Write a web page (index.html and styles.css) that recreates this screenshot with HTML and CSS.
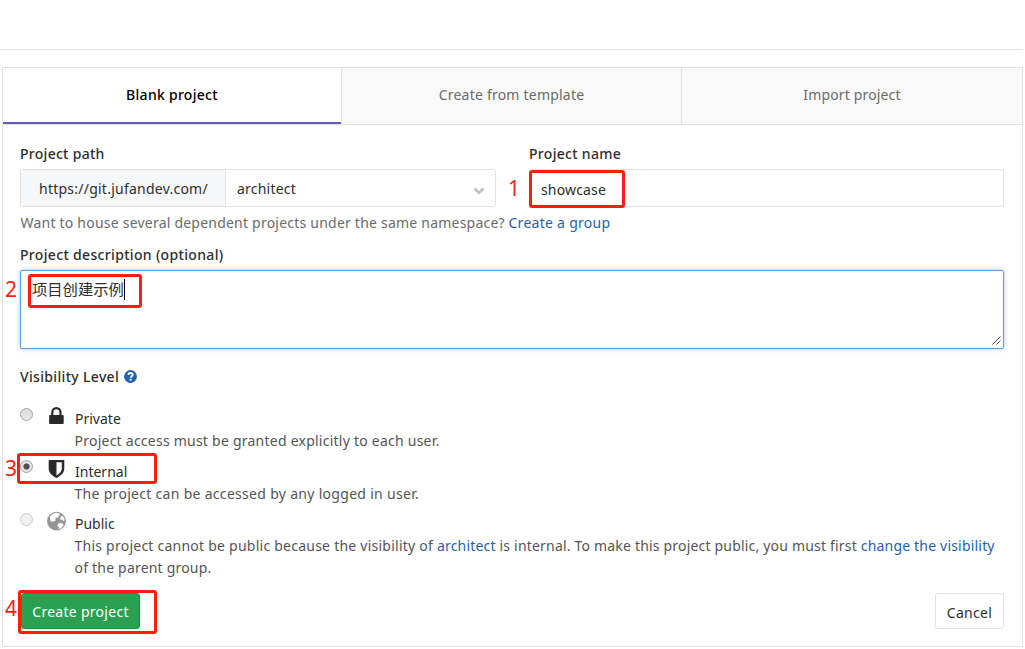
FILE: index.html
```html
<!DOCTYPE html>
<html lang="en">
<head>
<meta charset="utf-8">
<title>New project</title>
<link rel="stylesheet" href="styles.css">
</head>
<body>
<div class="page">
  <header class="topbar"></header>
  <main class="card">
    <nav class="tabs">
      <a class="tab active"><span class="t-blank">Blank project</span></a>
      <a class="tab"><span class="t-template">Create from template</span></a>
      <a class="tab"><span class="t-import">Import project</span></a>
    </nav>
    <form class="form">
      <div class="row">
        <div class="field path">
          <label class="label l-path">Project path</label>
          <div class="group">
            <span class="prefix"><span class="p-url">https://git.jufandev.com/</span></span>
            <span class="select"><span class="p-arch">architect</span>
              <svg class="chevron" width="12" height="8" viewBox="0 0 12 8"><path d="M1.500 1.500 6 5.800l4.500-4.300" fill="none" stroke="#bfbfbf" stroke-width="2.600"/></svg>
            </span>
          </div>
        </div>
        <div class="field name">
          <label class="label l-name">Project name</label>
          <div class="input"><span class="p-show">showcase</span></div>
        </div>
      </div>
      <p class="hint"><span class="h-text">Want to house several dependent projects under the same namespace?</span> <a class="link h-link">Create a group</a></p>
      <label class="label desc-label"><span class="l-desc">Project description (optional)</span></label>
      <div class="textarea"><span class="cjk">项目创建示例</span><span class="caret"></span>
        <svg class="grip" width="9" height="9" viewBox="0 0 9 9"><path d="M.5 8.500l8-8M4.500 8.500l4-4" stroke="#555" fill="none"/></svg>
      </div>
      <div class="label vis-label"><span class="l-vis">Visibility Level</span>
        <svg class="help" width="13" height="13" viewBox="0 0 13 13"><circle cx="6.500" cy="6.500" r="6.400" fill="#1f62b0"/><path d="M4.400 5c0-2.700 4.500-2.600 4.300-.2C8.600 6.200 6.700 6.200 6.700 7.800" fill="none" stroke="#fff" stroke-width="1.900"/><rect x="5.600" y="8.800" width="2" height="1.800" fill="#fff"/></svg>
      </div>
      <div class="option first">
        <span class="radio"></span>
        <svg class="icon" width="20" height="20" viewBox="0 0 20 20"><path d="M6.300 9V6.200a4.100 4.100 0 0 1 8.200 0V9" fill="none" stroke="#2a2a2a" stroke-width="2.200"/><rect x="3.100" y="9" width="14.600" height="9" rx=".8" fill="#2a2a2a"/></svg>
        <div class="body"><div class="title">Private</div><div class="text"><span class="d-priv">Project access must be granted explicitly to each user.</span></div></div>
      </div>
      <div class="option second">
        <span class="radio checked"></span>
        <svg class="icon" width="20" height="20" viewBox="0 0 20 20"><path d="M2.700 1h15.600v8.500c0 4.500-3.700 7.500-7.800 9.500-4.100-2-7.800-5-7.800-9.500z" fill="#2a2a2a"/><path d="M10.500 3.200h5.300v6.300c0 3-2.300 5.200-5.300 6.900z" fill="#fff"/></svg>
        <div class="body"><div class="title">Internal</div><div class="text"><span class="d-int">The project can be accessed by any logged in user.</span></div></div>
      </div>
      <div class="option third">
        <span class="radio disabled"></span>
        <svg class="icon" width="20" height="20" viewBox="0 0 20 20"><circle cx="10.500" cy="10.200" r="9.400" fill="#969696"/><path d="M3.800 5.500 6.300 3l3.900-1.200 3.300.6.300 1.700-1.500 1.300.2 1.500-1.800-.6-1.500 1.600.4 1.800-1.500.8-1.300-.5-.6 1.200-1.600-1.500-.6-2zM14.300 6.200l1.900-1.700 1.800 2.200.7 2.600-1.200.6-1.500-1.400-1.700.2zM12 12.800l2.300-1 2.700 1.200.6 1-2.200 3-2.700 1.200.2-1.900-1.400-1.600z" fill="#fff"/></svg>
        <div class="body"><div class="title">Public</div><div class="text"><span class="d-pub"><span class="d-lead">This project cannot be public because the visibility of </span><a class="link">architect</a> is internal. To make this project public, you must first <a class="link">change the visibility</a></span><br><span class="d-parent">of the parent group.</span></div></div>
      </div>
      <div class="actions">
        <button type="button" class="btn create"><span class="b-create">Create project</span></button>
        <button type="button" class="btn cancel"><span class="b-cancel">Cancel</span></button>
      </div>
    </form>
  </main>
  <span class="mark m1"></span><span class="num n1">1</span>
  <span class="mark m2"></span><span class="num n2">2</span>
  <span class="mark m3"></span><span class="num n3">3</span>
  <span class="mark m4"></span><span class="num n4">4</span>
</div>
</body>
</html>
```
FILE: styles.css
```css
* { box-sizing: border-box; }
body { margin: 0; background: #fff; color: #2e2e2e; font: 14px/20px "Noto Sans", "Noto Sans CJK SC", sans-serif; }
.page { position: relative; width: 1023px; height: 649px; overflow: hidden; }
.topbar { height: 50px; border-bottom: 1px solid #e1e1e1; }
.card { margin: 17px 0 0 2px; width: 1021px; height: 580px; border: 1px solid #e1e1e1; }
.tabs { display: grid; grid-template-columns: 339px 340px 340px; height: 57px; border-bottom: 1px solid #e1e1e1; }
.tab { display: flex; align-items: center; justify-content: center; padding-bottom: 2px; background: #f9f9f9; color: #6b6b6b; border-right: 1px solid #e1e1e1; }
.tab:last-child { border-right: 0; }
.tab.active { background: #fff; color: #000; font-weight: 500; box-shadow: inset 0 -2px #5c5cb8; }
.form { padding: 18px 18px 0 17px; }
.form span, .label { white-space: nowrap; }
.row { display: flex; justify-content: space-between; }
.path { width: 476px; }
.name { width: 475px; }
.label { display: block; height: 26px; line-height: 22px; font-weight: 500; }
.group, .input { display: flex; height: 38px; border: 1px solid #e1e1e1; border-radius: 3px; }
.input { align-items: center; padding: 3px 0 0 11px; }
.prefix { width: 205px; padding: 9px 0 0 18px; background: #f5f7f9; border-right: 1px solid #e1e1e1; }
.select { flex: 1; display: flex; justify-content: space-between; padding: 9px 10px 0 11px; }
.chevron { margin-top: 8px; }
.hint { margin: 6px 0 0; padding-left: .5px; color: #6b6b6b; }
.link { color: #1f5fae; }
.desc-label { margin-top: 11px; }
.textarea { display: flex; position: relative; width: 984px; height: 79px; padding: 8px 0 0 11px; border: 1px solid #5c9fe3; border-radius: 2px; box-shadow: 0 0 4px rgba(80, 150, 230, .5); }
.cjk { font-size: 15.300px; }
.caret { width: 1px; height: 21px; background: #000; }
.grip { position: absolute; right: 2px; bottom: 3px; }
.vis-label { display: flex; margin-top: 17px; }
.help { margin: 4px 0 0 4.500px; }
.option { display: grid; grid-template-columns: 13px 20px 1fr; column-gap: 13px; margin-top: 15px; height: 44px; }
.radio { width: 13px; height: 13px; margin-top: 1px; border: 1px solid #a3a3a3; border-radius: 50%; background: linear-gradient(#ddd, #e9e9e9); }
.checked { background: radial-gradient(circle, #505050 0 2.700px, #e2e2e2 3.500px); }
.disabled { border-color: #ccc; background: #f0f0f0; }
.icon { margin-top: -1px; }
.body { margin-left: -13px; padding: 1px 0 0 8.500px; }
.title, .text { line-height: 22px; white-space: nowrap; }
.title { padding-left: .5px; }
.text { color: #555; }
.second { margin-top: 8px; }
.second .body { padding-top: 2px; }
.second .icon { margin-top: 0; }
.third { margin-top: 9px; }
.actions { display: flex; justify-content: space-between; margin-top: 37px; padding-left: 1px; }
.btn { height: 36px; padding: 0; border: 1px solid #e1e1e1; border-radius: 3px; background: #fff; color: #2e2e2e; font: inherit; }
.create { width: 119px; background: #2aa150; border-color: #238c45; color: #fff; padding-top: 1px; }
.cancel { width: 69px; padding-top: 3px; }

/* Per-text tracking */
.t-blank, .l-path, .h-link, .b-create { letter-spacing: .28px; }
.l-name, .d-int, .b-cancel { letter-spacing: .3px; }
.t-template, .h-text, .p-arch { letter-spacing: .22px; }
.t-import, .p-show { letter-spacing: .15px; }
.p-url, .d-priv, .d-lead { letter-spacing: .24px; }
.l-desc, .l-vis { letter-spacing: .33px; }
.d-pub { letter-spacing: .19px; }
.d-parent { letter-spacing: .2px; }

/* Numbered step callouts */
.mark { position: absolute; border: 3px solid #ff1d10; border-radius: 3px; }
.m1 { left: 529px; top: 170px; width: 96px; height: 38px; }
.m2 { left: 28px; top: 274px; width: 114px; height: 34px; }
.m3 { left: 17px; top: 453px; width: 140px; height: 31px; }
.m4 { left: 18px; top: 590px; width: 139px; height: 44px; }
.num { position: absolute; color: #ff1d10; font-size: 21px; line-height: 24px; }
.n1 { left: 508px; top: 176px; }
.n2 { left: 5px; top: 277px; }
.n3 { left: 5px; top: 456px; }
.n4 { left: 5px; top: 596px; }
```
